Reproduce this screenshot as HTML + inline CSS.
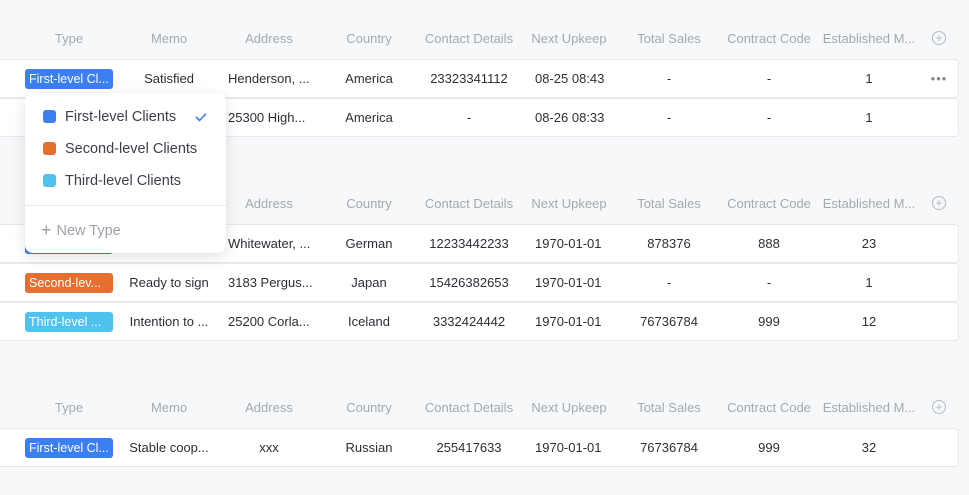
<!DOCTYPE html><html><head><style>
body{margin:0;width:969px;height:495px;background:#f7f8fa;font-family:"Liberation Sans",Arial,sans-serif;font-size:13px;color:#2b2f36;position:relative;overflow:hidden}
.h,.r{position:absolute;left:0;width:959px;height:39px}
.r{background:#fff;border:1px solid #e6e8ec;border-left:none;border-radius:0 4px 4px 0;box-sizing:border-box}
.r .c{line-height:37px;height:37px}
.h{color:#a3a8b2}
.c{position:absolute;top:0;height:39px;line-height:39px;width:100px;text-align:center;white-space:nowrap}
.l{text-align:left}
.t{position:absolute;left:25px;top:9px;width:88px;height:20px;line-height:20px;border-radius:3px;color:#fff;font-size:12.5px;padding-left:4px;box-sizing:border-box;white-space:nowrap;overflow:hidden}
.plus{position:absolute;left:932px;top:12px;width:12px;height:12px;border:1px solid #b5b9c2;border-radius:50%;color:#b5b9c2;font-size:12px;line-height:12px;text-align:center}
.dd{position:absolute;left:25px;top:93px;width:201px;height:160px;background:#fff;border-radius:8px;box-shadow:0 4px 14px rgba(0,0,0,.12)}
.it{position:absolute;left:18px;height:20px;line-height:20px;font-size:14.5px;color:#3a3f48}
.sq{display:inline-block;width:13px;height:13px;border-radius:3px;vertical-align:-2px;margin-right:9px}
</style></head><body>

<div class="h" style="top:19px"><div class="c" style="left:19px">Type</div><div class="c" style="left:119px">Memo</div><div class="c" style="left:219px">Address</div><div class="c" style="left:319px">Country</div><div class="c" style="left:419px">Contact Details</div><div class="c" style="left:519px">Next Upkeep</div><div class="c" style="left:619px">Total Sales</div><div class="c" style="left:719px">Contract Code</div><div class="c" style="left:819px">Established M...</div><div class="plus">+</div></div>
<div class="r" style="top:59px"><div class="t" style="background:#3b7ff0">First-level Cl...</div><div class="c" style="left:119px">Satisfied</div><div class="c l" style="left:228px">Henderson, ...</div><div class="c" style="left:319px">America</div><div class="c" style="left:419px">23323341112</div><div class="c l" style="left:535px">08-25 08:43</div><div class="c" style="left:619px">-</div><div class="c" style="left:719px">-</div><div class="c" style="left:819px">1</div><div class="c" style="left:889px;color:#888;letter-spacing:1px">•••</div></div>
<div class="r" style="top:98px"><div class="c l" style="left:228px">25300 High...</div><div class="c" style="left:319px">America</div><div class="c" style="left:419px">-</div><div class="c l" style="left:535px">08-26 08:33</div><div class="c" style="left:619px">-</div><div class="c" style="left:719px">-</div><div class="c" style="left:819px">1</div></div>

<div class="h" style="top:184px"><div class="c" style="left:219px">Address</div><div class="c" style="left:319px">Country</div><div class="c" style="left:419px">Contact Details</div><div class="c" style="left:519px">Next Upkeep</div><div class="c" style="left:619px">Total Sales</div><div class="c" style="left:719px">Contract Code</div><div class="c" style="left:819px">Established M...</div><div class="plus">+</div></div>
<div class="r" style="top:224px"><div class="t" style="background:#3b7ff0">First-level Cl...</div><div class="c l" style="left:228px">Whitewater, ...</div><div class="c" style="left:319px">German</div><div class="c" style="left:419px">12233442233</div><div class="c l" style="left:535px">1970-01-01</div><div class="c" style="left:619px">878376</div><div class="c" style="left:719px">888</div><div class="c" style="left:819px">23</div></div>
<div class="r" style="top:263px"><div class="t" style="background:#e56f30">Second-lev...</div><div class="c" style="left:119px">Ready to sign</div><div class="c l" style="left:228px">3183 Pergus...</div><div class="c" style="left:319px">Japan</div><div class="c" style="left:419px">15426382653</div><div class="c l" style="left:535px">1970-01-01</div><div class="c" style="left:619px">-</div><div class="c" style="left:719px">-</div><div class="c" style="left:819px">1</div></div>
<div class="r" style="top:302px"><div class="t" style="background:#4fc3ee">Third-level ...</div><div class="c" style="left:119px">Intention to ...</div><div class="c l" style="left:228px">25200 Corla...</div><div class="c" style="left:319px">Iceland</div><div class="c" style="left:419px">3332424442</div><div class="c l" style="left:535px">1970-01-01</div><div class="c" style="left:619px">76736784</div><div class="c" style="left:719px">999</div><div class="c" style="left:819px">12</div></div>

<div class="h" style="top:388px"><div class="c" style="left:19px">Type</div><div class="c" style="left:119px">Memo</div><div class="c" style="left:219px">Address</div><div class="c" style="left:319px">Country</div><div class="c" style="left:419px">Contact Details</div><div class="c" style="left:519px">Next Upkeep</div><div class="c" style="left:619px">Total Sales</div><div class="c" style="left:719px">Contract Code</div><div class="c" style="left:819px">Established M...</div><div class="plus">+</div></div>
<div class="r" style="top:428px"><div class="t" style="background:#3b7ff0">First-level Cl...</div><div class="c" style="left:119px">Stable coop...</div><div class="c" style="left:219px">xxx</div><div class="c" style="left:319px">Russian</div><div class="c" style="left:419px">255417633</div><div class="c l" style="left:535px">1970-01-01</div><div class="c" style="left:619px">76736784</div><div class="c" style="left:719px">999</div><div class="c" style="left:819px">32</div></div>

<div class="dd">
<div class="it" style="top:14px"><span class="sq" style="background:#3b7ff0"></span>First-level Clients</div>
<svg style="position:absolute;left:170px;top:19px" width="12" height="10"><path d="M1 5l3.5 3.5L11 1.5" stroke="#3b7ff0" stroke-width="1.6" fill="none"/></svg>
<div class="it" style="top:46px"><span class="sq" style="background:#e56f30"></span>Second-level Clients</div>
<div class="it" style="top:78px"><span class="sq" style="background:#4fc3ee"></span>Third-level Clients</div>
<div style="position:absolute;left:0;right:0;top:112px;border-top:1px solid #e8eaee"></div>
<div class="it" style="top:127px;color:#9aa0aa;left:16px"><span style="font-size:18px;margin-right:5px;vertical-align:-1px">+</span>New Type</div>
</div>
</body></html>
